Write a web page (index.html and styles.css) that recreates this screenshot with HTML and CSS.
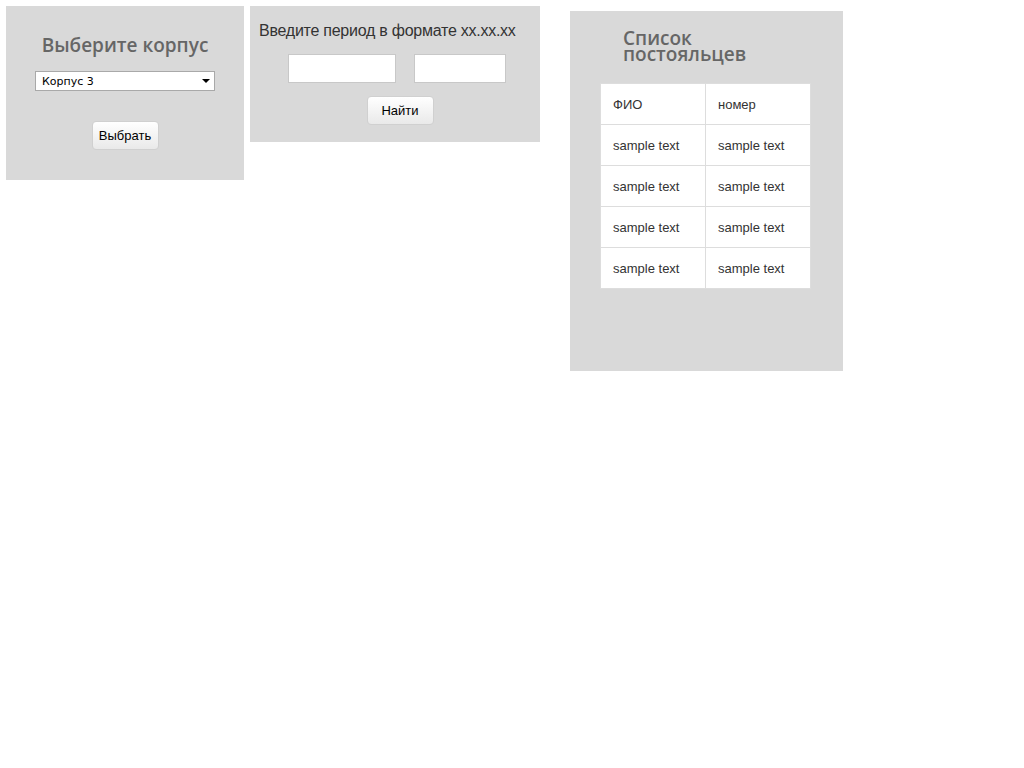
FILE: index.html
```html
<!DOCTYPE html>
<html>
<head>
<meta charset="utf-8">
<link rel="stylesheet" href="styles.css">
</head>
<body>
<div class="page">
  <div class="panel panel-korpus">
    <h2 class="title">Выберите корпус</h2>
    <div class="select">
      <span class="select-text">Корпус 3</span>
      <span class="select-arrow"></span>
    </div>
    <button class="btn btn-choose">Выбрать</button>
  </div>
  <div class="panel panel-period">
    <div class="period-label">Введите период в формате xx.xx.xx</div>
    <div class="inputs">
      <input class="field field-a" type="text">
      <input class="field field-b" type="text">
    </div>
    <button class="btn btn-find">Найти</button>
  </div>
  <div class="panel panel-list">
    <h2 class="list-title">Список<br>постояльцев</h2>
    <table class="residents">
      <tr><td>ФИО</td><td>номер</td></tr>
      <tr><td>sample text</td><td>sample text</td></tr>
      <tr><td>sample text</td><td>sample text</td></tr>
      <tr><td>sample text</td><td>sample text</td></tr>
      <tr><td>sample text</td><td>sample text</td></tr>
    </table>
  </div>
</div>
</body>
</html>
```
FILE: styles.css
```css
html, body {
  margin: 0;
  padding: 0;
  background: #fff;
}
.page {
  display: flex;
  align-items: flex-start;
  gap: 6px;
  padding: 6px;
  font-family: "Liberation Sans", Arial, sans-serif;
}
.panel {
  background: #d9d9d9;
  box-sizing: border-box;
}
.panel-korpus {
  width: 238px;
  height: 174px;
  display: flex;
  flex-direction: column;
  align-items: center;
}
.title {
  margin: 27px 0 0 0;
  font-family: "Open Sans", sans-serif;
  font-weight: 600;
  font-size: 19px;
  line-height: 25px;
  color: #666;
}
.select {
  margin-top: 13px;
  width: 180px;
  height: 20px;
  box-sizing: border-box;
  border: 1px solid #a9a9a9;
  background: #fff;
  display: flex;
  align-items: center;
  justify-content: space-between;
  padding: 0 4px 0 6px;
}
.select-text {
  font-family: "DejaVu Sans", sans-serif;
  font-size: 11px;
  color: #000;
}
.select-arrow {
  width: 0;
  height: 0;
  border-left: 4px solid transparent;
  border-right: 4px solid transparent;
  border-top: 4px solid #000;
}
.btn {
  font-family: "Liberation Sans", Arial, sans-serif;
  font-size: 13px;
  color: #000;
  height: 29px;
  box-sizing: border-box;
  border: 1px solid #d0d0d0;
  border-radius: 4px;
  background: linear-gradient(#ffffff, #e9e9e9);
  padding: 0 6px;
}
.btn-choose {
  margin-top: 30px;
  width: 67px;
}
.panel-period {
  width: 290px;
  height: 136px;
  display: flex;
  flex-direction: column;
  align-items: center;
}
.period-label {
  align-self: flex-start;
  margin: 16px 0 0 9px;
  font-size: 16px;
  line-height: 18px;
  color: #333;
  letter-spacing: -0.25px;
}
.inputs {
  margin-top: 14px;
  display: flex;
  gap: 18px;
  margin-left: 4px;
}
.field {
  height: 29px;
  box-sizing: border-box;
  border: 1px solid #c8c8c8;
  background: #fff;
  margin: 0;
  padding: 0;
}
.field-a { width: 108px; }
.field-b { width: 92px; }
.btn-find {
  margin-top: 13px;
  margin-left: 10px;
  width: 67px;
}
.panel-list {
  width: 273px;
  height: 360px;
  margin-left: 24px;
  margin-top: 5px;
  padding: 19px 0 0 30px;
}
.list-title {
  margin: 0 0 21px 23px;
  font-family: "Open Sans", sans-serif;
  font-weight: 600;
  font-size: 19px;
  line-height: 16px;
  color: #666;
}
.residents {
  border-collapse: collapse;
  background: #fff;
  width: 211px;
}
.residents td {
  border: 1px solid #ddd;
  width: 105px;
  height: 41px;
  box-sizing: border-box;
  padding: 0 12px;
  font-size: 13px;
  color: #333;
}
```
